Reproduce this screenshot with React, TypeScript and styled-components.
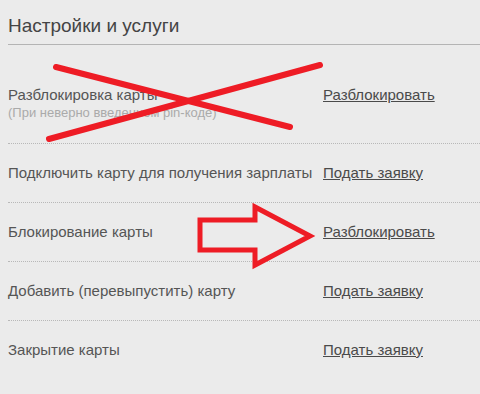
import React from "react";
import styled, { createGlobalStyle } from "styled-components";

const GlobalStyle = createGlobalStyle`
  html, body {
    margin: 0;
    padding: 0;
    background: #ebebeb;
  }
  body {
    font-family: "Liberation Sans", Arial, sans-serif;
    overflow: hidden;
  }
`;

const Page = styled.div`
  position: relative;
  width: 480px;
  height: 394px;
  padding-left: 8px;
  box-sizing: border-box;
  background: #ebebeb;
  overflow: hidden;
`;

const Title = styled.h2`
  margin: 0;
  padding: 15px 0 8px;
  font-size: 19px;
  line-height: 21px;
  font-weight: normal;
  color: #444;
  border-bottom: 1px solid #b4b4b4;
`;

const List = styled.div`
  display: flex;
  flex-direction: column;
`;

const Row = styled.div<{ $first?: boolean; $last?: boolean }>`
  display: grid;
  grid-template-columns: 315px auto;
  align-items: start;
  padding: ${(p) => (p.$first ? "41px 0 22px" : "20px 0")};
  border-bottom: ${(p) => (p.$last ? "none" : "1px dotted #b8b8b8")};
`;

const Label = styled.div`
  display: flex;
  flex-direction: column;
`;

const Name = styled.span`
  font-size: 15px;
  line-height: 18px;
  color: #555;
`;

const Hint = styled.span`
  font-size: 13px;
  line-height: 16px;
  color: #aaa;
  margin-top: 1px;
`;

const Action = styled.a`
  font-size: 15px;
  line-height: 18px;
  color: #4a4a4a;
  text-decoration: underline;
  cursor: pointer;
  white-space: nowrap;
`;

const Overlay = styled.svg`
  position: absolute;
  left: 0;
  top: 0;
  pointer-events: none;
`;

interface Item {
  name: string;
  hint?: string;
  action: string;
}

const items: Item[] = [
  { name: "Разблокировка карты", hint: "(При неверно введенном pin-коде)", action: "Разблокировать" },
  { name: "Подключить карту для получения зарплаты", action: "Подать заявку" },
  { name: "Блокирование карты", action: "Разблокировать" },
  { name: "Добавить (перевыпустить) карту", action: "Подать заявку" },
  { name: "Закрытие карты", action: "Подать заявку" },
];

const App = () => {
  return (
    <>
      <GlobalStyle />
      <Page>
        <Title>Настройки и услуги</Title>
        <List>
          {items.map((item, i) => (
            <Row key={i} $first={i === 0} $last={i === items.length - 1}>
              <Label>
                <Name>{item.name}</Name>
                {item.hint && <Hint>{item.hint}</Hint>}
              </Label>
              <Action>{item.action}</Action>
            </Row>
          ))}
        </List>

        {/* red annotations drawn over the list */}
        <Overlay width="480" height="394" viewBox="0 0 480 394">
          <g stroke="#ee1c25" strokeWidth="6" strokeLinecap="round" fill="none">
            <line x1="56" y1="67" x2="290" y2="127" />
            <line x1="320" y1="65" x2="49" y2="139" />
          </g>
          <polygon
            points="200,220 255,220 255,207 310,236 255,265 255,250 200,250"
            fill="none"
            stroke="#ee1c25"
            strokeWidth="5"
            strokeLinejoin="miter"
          />
        </Overlay>
      </Page>
    </>
  );
};

export default App;
